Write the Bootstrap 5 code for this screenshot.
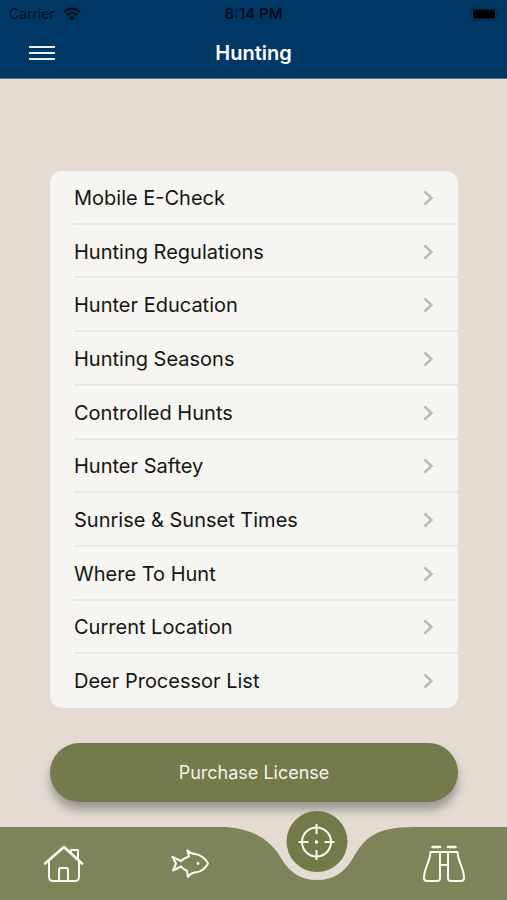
<!DOCTYPE html>
<html lang="en">
<head>
<meta charset="utf-8">
<meta name="viewport" content="width=device-width, initial-scale=1">
<title>Hunting</title>
<link href="https://cdn.jsdelivr.net/npm/bootstrap@5.3.0/dist/css/bootstrap.min.css" rel="stylesheet">
<style>
  body { background: #e4dcd3; font-family: Inter, "Liberation Sans", sans-serif; color: #151515; }
  svg { display: block; }
  .app-header { background: #003865; border-bottom: 1px solid #4d7493; }
  .status-bar { height: 27px; padding: 0 9px; color: #000d1a; font-size: 14px; line-height: 27px; }
  .status-time { font-size: 15px; }
  .title-bar { height: 51px; padding: 0 28px; }
  .title-bar h1 { font-size: 20px; line-height: 28px; font-weight: 600; }
  .menu-list { margin-top: 92px; border-radius: 12px; background: #f6f5f1; overflow: hidden; }
  .menu-row { padding-left: 24px; color: #151515; font-size: 20px; line-height: 28px; text-decoration: none; }
  .menu-row-inner { padding-top: 2px; padding-right: 24px; border-bottom: 2px solid #e9e7e4; }
  .menu-row:last-child .menu-row-inner { border-bottom-color: transparent; }
  .buy-btn, .buy-btn:hover { height: 59px; margin-top: 35px; margin-bottom: 25px; background: #747a4c; color: #f4f3ea; font-size: 18px; box-shadow: 0 8px 10px rgba(60, 58, 60, .42); }
  .page-main { padding: 0 49px 0 50px; }
  .tab-bar { height: 73px; background: #7e835a; }
  .notch { position: absolute; top: 0; left: 50%; transform: translateX(-50%); }
  .aim-btn { position: absolute; top: -16px; left: 50%; transform: translateX(-50%); width: 61px; height: 61px; background: #727a49; }
</style>
</head>
<body>
<div class="d-flex flex-column min-vh-100">
  <header class="app-header">
    <div class="status-bar row g-0">
      <div class="col d-flex align-items-center gap-2">
        <span>Carrier</span>
        <svg width="18" height="14" viewBox="0 0 18 14" fill="none" stroke="#000d1a" stroke-width="2.4" aria-hidden="true"><path d="M1 4.900C5.500.6 12.500.6 17 4.900M4 8.200c2.900-2.600 7.100-2.600 10 0"/><path d="M6.200 10.400q2.800-2.200 5.600 0L9 13.400z" fill="#000d1a" stroke="none"/></svg>
      </div>
      <div class="status-time col-auto fw-semibold">8:14 PM</div>
      <div class="col d-flex align-items-center justify-content-end">
        <svg width="28" height="14" viewBox="0 0 28 14" aria-hidden="true"><rect x="1.500" y="1" width="25" height="12" rx="3" fill="none" stroke="#002c50"/><rect x="3" y="2.500" width="22" height="9" rx="1.500" fill="#000"/><path d="M27.500 5v4" stroke="#002c50"/></svg>
      </div>
    </div>
    <div class="title-bar row g-0 align-items-center">
      <div class="col d-flex">
        <button class="btn d-flex p-0 border-0" type="button" aria-label="Menu"><svg width="27" height="16" viewBox="0 0 27 16" stroke="#e4f2fb" stroke-width="2"><path d="M1 2h26M1 8h26M1 14h26"/></svg></button>
      </div>
      <h1 class="col-auto m-0 text-white">Hunting</h1>
      <div class="col"></div>
    </div>
  </header>

  <main class="page-main flex-grow-1 d-flex flex-column">
    <svg width="0" height="0" aria-hidden="true"><symbol id="chev" viewBox="0 0 12 16"><path d="M2.500 1.500 9.500 8l-7 6.500" fill="none" stroke="#bab9b6" stroke-width="2.400"/></symbol></svg>
    <nav class="menu-list flex-grow-1 d-flex flex-column" aria-label="Hunting">
      <a class="menu-row flex-fill d-flex" href="#"><span class="menu-row-inner flex-fill d-flex align-items-center justify-content-between">Mobile E-Check<svg width="12" height="16"><use href="#chev"/></svg></span></a>
      <a class="menu-row flex-fill d-flex" href="#"><span class="menu-row-inner flex-fill d-flex align-items-center justify-content-between">Hunting Regulations<svg width="12" height="16"><use href="#chev"/></svg></span></a>
      <a class="menu-row flex-fill d-flex" href="#"><span class="menu-row-inner flex-fill d-flex align-items-center justify-content-between">Hunter Education<svg width="12" height="16"><use href="#chev"/></svg></span></a>
      <a class="menu-row flex-fill d-flex" href="#"><span class="menu-row-inner flex-fill d-flex align-items-center justify-content-between">Hunting Seasons<svg width="12" height="16"><use href="#chev"/></svg></span></a>
      <a class="menu-row flex-fill d-flex" href="#"><span class="menu-row-inner flex-fill d-flex align-items-center justify-content-between">Controlled Hunts<svg width="12" height="16"><use href="#chev"/></svg></span></a>
      <a class="menu-row flex-fill d-flex" href="#"><span class="menu-row-inner flex-fill d-flex align-items-center justify-content-between">Hunter Saftey<svg width="12" height="16"><use href="#chev"/></svg></span></a>
      <a class="menu-row flex-fill d-flex" href="#"><span class="menu-row-inner flex-fill d-flex align-items-center justify-content-between">Sunrise &amp; Sunset Times<svg width="12" height="16"><use href="#chev"/></svg></span></a>
      <a class="menu-row flex-fill d-flex" href="#"><span class="menu-row-inner flex-fill d-flex align-items-center justify-content-between">Where To Hunt<svg width="12" height="16"><use href="#chev"/></svg></span></a>
      <a class="menu-row flex-fill d-flex" href="#"><span class="menu-row-inner flex-fill d-flex align-items-center justify-content-between">Current Location<svg width="12" height="16"><use href="#chev"/></svg></span></a>
      <a class="menu-row flex-fill d-flex" href="#"><span class="menu-row-inner flex-fill d-flex align-items-center justify-content-between">Deer Processor List<svg width="12" height="16"><use href="#chev"/></svg></span></a>
    </nav>
    <button class="buy-btn btn rounded-pill border-0 w-100" type="button">Purchase License</button>
  </main>

  <nav class="tab-bar row g-0 row-cols-4 align-items-stretch" aria-label="Sections">
    <a class="col d-flex align-items-center justify-content-center" href="#" aria-label="Home">
      <svg width="42" height="38" viewBox="0 0 42 38" fill="none" stroke="#fbfaf0" stroke-width="2" stroke-linecap="round" stroke-linejoin="round"><path d="M3 18.500 22 2l18 16.500" stroke-width="2.600"/><path d="M7 17v15q0 4 4 4h22q4 0 4-4V17M29 8V5h7v9"/><path d="M17 36V25q0-2 2-2h5q2 0 2 2v11"/></svg>
    </a>
    <a class="col d-flex align-items-center justify-content-center" href="#" aria-label="Fishing">
      <svg width="38" height="30" viewBox="0 0 38 30" fill="none" stroke="#fbfaf0" stroke-width="2" stroke-linejoin="round" stroke-linecap="round"><path d="M10 12C12.500 9.500 14.500 8.500 18 7.500L16.500 1.500Q20 5 24 5C30 6 34.500 9.500 37 14.500 34 20 29 23 24 23.500Q19.500 24 17 28L16 22C13.500 21 12 19.500 10 17.500L2 21.500 5 14.500 1.500 8z"/><circle cx="27" cy="14.500" r="1.400" fill="#fbfaf0" stroke="none"/></svg>
    </a>
    <div class="col position-relative">
      <svg class="notch" width="194" height="54" viewBox="0 0 194 54" aria-hidden="true"><path d="M0 0C30 0 50 12 61 31 69 45 80 53 97 53s28-8 36-22C144 12 154 0 194 0z" fill="#e4dcd3"/></svg>
      <a class="aim-btn rounded-circle d-flex align-items-center justify-content-center" href="#" aria-label="Hunting">
        <svg width="38" height="38" viewBox="0 0 38 38" fill="none" stroke="#fbfaf0" stroke-width="2"><circle cx="19" cy="19" r="14.500"/><path d="M19 1v10M19 27v10M1 19h10M27 19h10" /><rect x="18" y="18" width="2" height="2" stroke-width="1"/></svg>
      </a>
    </div>
    <a class="col d-flex align-items-center justify-content-center" href="#" aria-label="Wildlife viewing">
      <svg width="42" height="38" viewBox="0 0 42 38" fill="none" stroke="#fbfaf0" stroke-width="2" stroke-linejoin="round" stroke-linecap="round"><path d="M9.500 2h7.500M25 2h7.500" stroke-width="2.600"/><path d="M7.500 7H17v26q0 3-3 3H4q-3 0-3-3c0-10 6-16 6.500-26zM34.500 7H25v26q0 3 3 3h10q3 0 3-3c0-10-6-16-6.500-26zM17 7h8M17 20h8"/></svg>
    </a>
  </nav>
</div>
<script src="https://cdn.jsdelivr.net/npm/bootstrap@5.3.0/dist/js/bootstrap.bundle.min.js"></script>
</body>
</html>
